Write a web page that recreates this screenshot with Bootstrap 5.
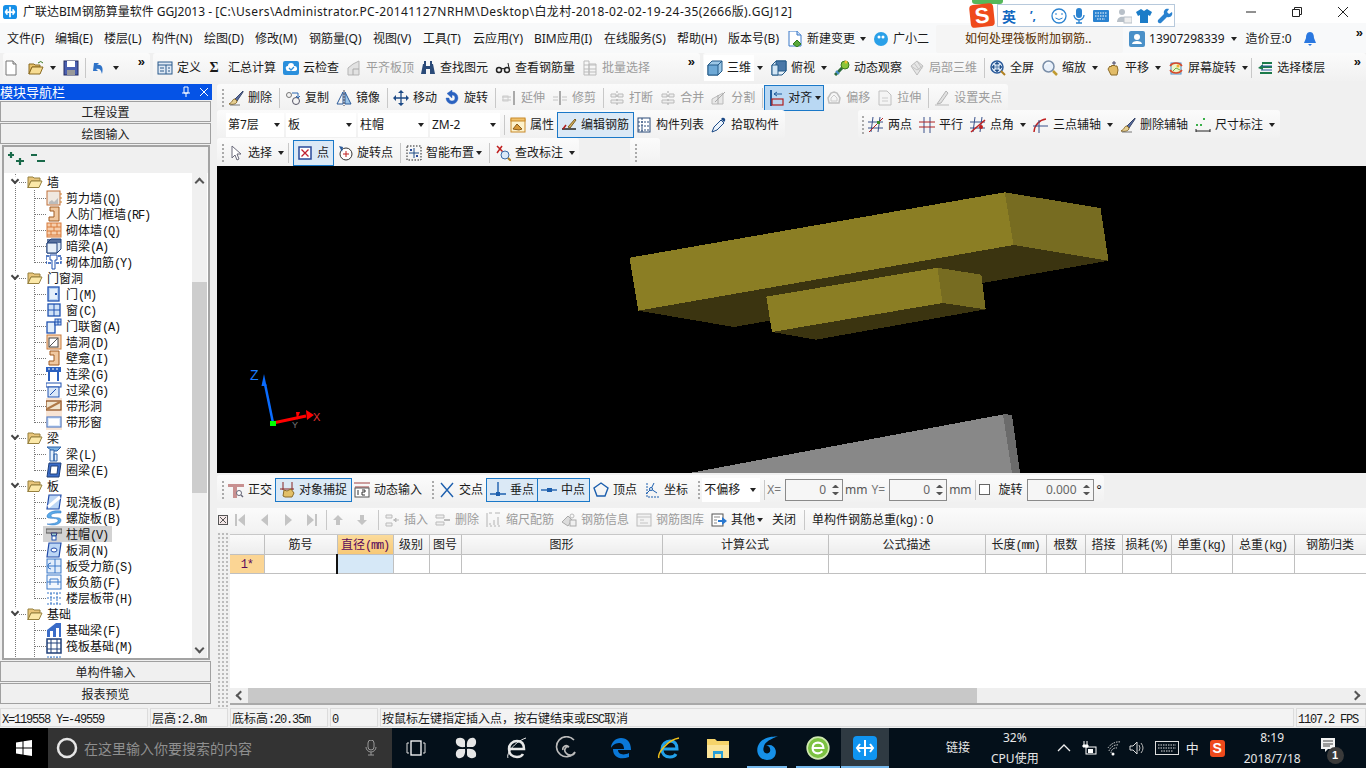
<!DOCTYPE html>
<html lang="zh">
<head>
<meta charset="utf-8">
<title>广联达BIM钢筋算量软件 GGJ2013</title>
<link href="https://cdn.jsdelivr.net/npm/bootstrap@5.3.2/dist/css/bootstrap.min.css" rel="stylesheet">
<style>
html,body{width:1366px;height:768px;overflow:hidden;margin:0}
body{background:#f0f0f0;font:12px/16px "Noto Sans","Noto Sans CJK SC",sans-serif;color:#1a1a1a}
svg{flex:none;display:block}
.gd-app{height:768px}
.gd-ic{width:16px;height:16px}
.gd-ic14{width:14px;height:14px}
.gd-m{font:12px/1 "Liberation Mono",monospace;letter-spacing:-1.2px}
.gd-off{color:#9c9c9c}
.gd-title{height:23px;background:#fff;padding-left:3px;gap:6px;white-space:nowrap;flex:none}
.gd-path{letter-spacing:.39px}
.gd-winbtn{width:46px;height:23px}
.gd-menu{height:30px;background:#f8f9fa;white-space:nowrap;padding:2px 0 0 7px;flex:none}
.gd-menugrid{display:grid;grid-template-columns:48px 49px 48px 52px 51px 54px 64px 50px 50px 61px 70px 73px 51px 60px;flex:none}
.gd-msg{width:187px;height:28px;background:#f5f5f5;color:#5a3000;padding-left:29px;line-height:28px;border-radius:2px;flex:none}
.gd-tb{height:28px;gap:3px;margin-bottom:3px;padding-left:3px;flex:none}
.gd-grp{height:28px;gap:7px;padding:2px 2px 0;flex:none;background:linear-gradient(#fbfbfb,#f1f1f1);border-radius:3px;white-space:nowrap}
.gd-it{display:inline-flex;align-items:center;gap:4px;flex:none}
.gd-car{display:inline-block;flex:none;width:0;height:0;border:3px solid transparent;border-top:4px solid #222;border-bottom:0;margin-left:-1px}
.gd-it .gd-car{margin-left:0}
.gd-sep{width:1px;height:20px;background:#c8c8c8;flex:none}
.gd-sep+.gd-it{margin-left:-2px}
.gd-more{font:700 13px/12px "Liberation Sans",sans-serif;color:#111;margin:-12px 3px 0 auto;flex:none}
.gd-grip{width:2px;height:18px;flex:none;background:repeating-linear-gradient(#aaa 0 2px,transparent 2px 4px)}
.gd-grip+*{margin-left:-3px}
.gd-on{background:#dbe9f6;outline:1px solid #1a78c8;height:24px;padding:0 4px 0 3px}
.gd-on22{height:22px}
.gd-alignbtn{padding:0 2px 0 4px;gap:3px;background:#b9d8f3}
.gd-hot{background:#fff;padding:0 3px;margin:0 -3px;height:26px}
.gd-sum{gap:8px}
.gd-sum b{font:700 14px "Liberation Serif",serif;width:12px;text-align:center}
.gd-left{width:212px;flex:none;gap:1px}
.gd-panelhead{height:16px;background:#0553e6;color:#fff;padding:0 3px 0 0;line-height:16px;font-size:13px;flex:none}
.gd-navbtn{height:21px;background:#f0f0f0;border:1px solid #a0a0a0;border-radius:0;padding:2px 0 0;font-size:12px;line-height:17px;color:#222;text-align:center;margin-right:1px;flex:none}
.gd-treebox{height:515px;background:#fff;border:2px solid #a3a3a3;margin:0 2px;overflow:hidden;flex:none}
.gd-treetop{height:26px;background:#f0f0f0;margin:0 -2px;padding:0 0 4px 5px;gap:3px;flex:none}
.gd-treeflex{min-height:0;flex:1;overflow:hidden}
.gd-tree{flex:1;min-width:0;padding-top:1px;overflow:hidden}
.gd-hd,.gd-nd{height:16px;white-space:nowrap;display:flex;align-items:center;font-family:"Noto Sans CJK SC",sans-serif;color:#111}
.gd-hd{padding-left:23px;gap:4px;background:repeating-linear-gradient(#777 0 1px,transparent 1px 2px) 11px 0/1px 100% no-repeat,repeating-linear-gradient(90deg,#777 0 1px,transparent 1px 2px) 15px 8px/8px 1px no-repeat;position:relative}
.gd-hd::before{content:"";width:6px;height:6px;border:solid #444;border-width:0 2px 2px 0;transform:rotate(45deg);position:absolute;left:8px;top:3px;background:#fff;box-shadow:2px 2px 0 #fff}
.gd-nd{padding-left:42px;gap:4px;background:repeating-linear-gradient(#777 0 1px,transparent 1px 2px) 11px 0/1px 100% no-repeat,repeating-linear-gradient(#777 0 1px,transparent 1px 2px) 30px 0/1px 100% no-repeat,repeating-linear-gradient(90deg,#777 0 1px,transparent 1px 2px) 31px 8px/11px 1px no-repeat}
.gd-nd.gd-end{background-size:1px 100%,1px 9px,11px 1px}
.gd-nd.gd-sel{background:linear-gradient(#d3d3d3,#d3d3d3) 39px 0/69px 100% no-repeat,repeating-linear-gradient(#777 0 1px,transparent 1px 2px) 11px 0/1px 100% no-repeat,repeating-linear-gradient(#777 0 1px,transparent 1px 2px) 30px 0/1px 100% no-repeat,repeating-linear-gradient(90deg,#777 0 1px,transparent 1px 2px) 31px 8px/8px 1px no-repeat}
.gd-sb{width:15px;flex:none;background:#f0f0f0;margin-right:1px}
.gd-sbtn{height:16px;display:flex;align-items:center;justify-content:center;flex:none}
.gd-chev{width:7px;height:7px;border:solid #555;border-width:2px 0 0 2px;transform:rotate(45deg);margin-top:3px}
.gd-chev.dn{transform:rotate(225deg);margin:-3px 0 0}
.gd-chev.lf{transform:rotate(-45deg);margin:0 0 0 3px}
.gd-chev.rt{transform:rotate(135deg);margin:0 3px 0 0}
.gd-thumb{background:#cdcdcd;height:211px;margin-top:93px}
.gd-work{height:623px;flex:none}
.gd-right{flex:1;min-width:0;margin-left:5px}
.gd-row{height:28px;flex:none}
.gd-rowa{height:26px}
.gd-rowa .gd-grp{height:26px}
.gd-rowd{height:30px}
.gd-rowd .gd-grp{height:27px;margin-top:2px}
.gd-p5{padding-left:5px}
.gd-p9{padding-left:9px}
.gd-p4{padding-left:4px}
.gd-p0{padding-left:0}
.gd-combos{gap:2px}
.gd-combo{display:inline-flex;align-items:center;justify-content:space-between;background:#fff;width:70px;height:24px;padding-left:2px;flex:none}
.gd-combo .gd-car{margin:0 4px 0 0}
.gd-combo58{width:58px}
.gd-canvas{height:307px;background:#000;flex:none}
.gd-spin{width:58px;height:22px;border:1px solid #8a8a8a;background:#f6f6f6;color:#666;display:flex;align-items:center;justify-content:flex-end;flex:none;padding-right:3px;gap:6px}
.gd-spin67{width:67px}
.gd-arrows{width:7px;display:flex;flex-direction:column;gap:4px}
.gd-arrows i{display:block;border:3px solid transparent;border-bottom:3px solid #555;border-top:0}
.gd-arrows i+i{border-top:3px solid #555;border-bottom:0}
.gd-lbl{color:#777}
.gd-unit{color:#555}
.gd-chk{width:11px;height:11px;flex:none;border:1px solid #666}
.gd-panel{flex:1;min-height:0;padding-top:5px;background:#f0f0f0}
.gd-dock{width:13px;flex:none;background-image:radial-gradient(#bbb 1px,transparent 1px);background-size:4px 4px;margin-top:12px}
.gd-gridwrap{flex:1;min-width:0}
.gd-ptb{height:24px;gap:7px;background:linear-gradient(#fbfbfb,#f2f2f2);white-space:nowrap;padding-left:1px;margin-left:-13px;flex:none}
.gd-sheet{flex:1;background:#fff;margin-top:2px;overflow:hidden;border-top:1px solid #c8c8c8}
.gd-sheet .table{width:1136px;table-layout:fixed;margin:0;--bs-table-bg:transparent}
.gd-sheet th,.gd-sheet td{padding:0;height:19px;box-sizing:border-box;font-weight:400;text-align:center;vertical-align:middle;border:solid #c0c0c0;border-width:0 1px 1px 0;font:12px/14px "Noto Sans CJK SC",sans-serif;color:#222;overflow:hidden}
.gd-sheet thead th{background:linear-gradient(#fafafa,#ededed)}
.gd-sheet thead th.gd-cur{background:linear-gradient(#fbdb9c,#f7c876);color:#5a0a5a}
.gd-sheet td.gd-rh{background:#fbd594;color:#5a0a5a}
.gd-sheet td.gd-cc{background:#d6e8f7;border-left:2px solid #111}
.gd-hs{height:17px;flex:none;background:#efefef;border-bottom:2px solid #a9a9a9;margin-bottom:2px}
.gd-hsbtn{width:18px;flex:none;display:flex;justify-content:center}
.gd-hs b{display:block;width:729px;height:100%;background:#c8c8c8}
.gd-status{height:21px;gap:2px;background:#f0f0f0;padding-top:1px;white-space:nowrap;flex:none}
.gd-status>div{height:19px;border:1px solid #dcdcdc;background:#f3f3f3;padding:0 1px;line-height:17px;font-family:"Noto Sans CJK SC",sans-serif;overflow:hidden;flex:none}
.gd-status>div.gd-fps{flex:1}
.gd-w48{width:48px}.gd-w78{width:78px}.gd-w98{width:98px}.gd-w148{width:148px}.gd-w914{width:914px}
.gd-w147{width:147px}.gd-w547{width:547px}.gd-w791{width:791px}.gd-w568{width:568px}.gd-w422{width:422px}.gd-w362{width:362px}.gd-w30{width:30px}.gd-w887{width:887px}
.gd-task{height:40px;background:#04101a;color:#e8e8e8;white-space:nowrap;flex:none}
.gd-start{width:48px;height:40px;background:#000;flex:none}
.gd-search{width:344px;height:40px;background:#333;color:#8f8f8f;padding-left:8px;gap:6px;font-size:14px;font-family:"Noto Sans CJK SC",sans-serif;flex:none}
.gd-searchmic{margin-right:13px}
.gd-tk{width:48px;height:40px;display:flex;align-items:center;justify-content:center;flex:none;position:relative}
.gd-tk.ul{box-shadow:inset 0 -2px 0 #76b9ed}
.gd-tk.act{background:#2f3a42;box-shadow:inset 0 -2px 0 #76b9ed}
.gd-tk40{width:40px}.gd-tk44{width:44px}
.gd-tray{line-height:16px;text-align:center;flex:none}
.gd-tray2{line-height:21px}
.gd-zh{font-size:13px}
.gd-traysg{width:15px;height:17px;background:#ef4a1b;color:#fff;border-radius:3px;font:700 14px/17px "Liberation Sans",sans-serif;text-align:center;flex:none}
.gd-noteic{margin-top:-6px}
.gd-ime{position:absolute;left:968px;top:0;width:207px;height:27px}
.gd-imebar{position:absolute;left:29px;top:4px;width:178px;height:23px;background:#fff;border:1px solid #b7c9dc;padding-left:4px}
.gd-slogo{position:absolute;left:2px;top:4px;width:24px;height:23px;background:#ef4a1b;color:#fff;border-radius:4px;font:700 22px/23px "Liberation Sans",sans-serif;text-align:center;transform:rotate(-6deg)}
.gd-sleaf{position:absolute;left:4px;top:0;width:31px;height:4px;background:#55b85a;border-radius:0 0 3px 3px}
.gd-cn{font-weight:700;color:#1168c0;font-size:14px;width:28px;font-family:"Noto Sans CJK SC",sans-serif;flex:none}
.gd-punc{width:21px;font-weight:700;color:#1168c0;line-height:12px;flex:none}
.gd-badge1{position:absolute;left:21px;top:19px;width:17px;height:17px;border-radius:50%;background:#3a3a3a;color:#fff;font:700 11px/17px "Liberation Sans",sans-serif;text-align:center}
/* one-off nudges along a toolbar */
.gd-l-5{margin-left:-5px!important}.gd-l-4{margin-left:-4px!important}.gd-l-3{margin-left:-3px!important}.gd-l-2{margin-left:-2px!important}.gd-l-1{margin-left:-1px!important}.gd-l-7{margin-left:-7px!important}
.gd-l1{margin-left:1px!important}.gd-l2{margin-left:2px!important}.gd-l3{margin-left:3px!important}.gd-l5{margin-left:5px!important}.gd-l6{margin-left:6px!important}.gd-l7{margin-left:7px!important}.gd-l8{margin-left:8px!important}
.gd-l9{margin-left:9px!important}.gd-l10{margin-left:10px!important}.gd-l11{margin-left:11px!important}.gd-l18{margin-left:18px!important}.gd-l19{margin-left:19px!important}.gd-l21{margin-left:21px!important}.gd-l51{margin-left:51px!important}.gd-l57{margin-left:57px!important}.gd-l73{margin-left:73px!important}
</style>
</head>
<body>
<svg width="0" height="0" class="position-absolute">
<defs>
<symbol id="logo" viewBox="0 0 16 16"><rect width="16" height="16" rx="3" fill="#1790e8"/><path d="M8 2v12M3 8h10M5 5l-2 3 2 3M11 5l2 3-2 3" stroke="#fff" stroke-width="2" fill="none"/></symbol>
<symbol id="new" viewBox="0 0 16 16"><path d="M3 1h7l3 3v11H3z" fill="#fff" stroke="#777"/><path d="M10 1v3h3" fill="#ddd" stroke="#777"/></symbol>
<symbol id="newg" viewBox="0 0 16 16"><path d="M2 0h8l4 4v11H2z" fill="#fff" stroke="#3a78c8"/><path d="M10 0v4h4" fill="#cfe0f5" stroke="#3a78c8"/><path d="M10 9l4 4-4 3-4-3z" fill="#5aa83a" stroke="#2c7a1c"/></symbol>
<symbol id="open" viewBox="0 0 16 16"><path d="M1 4h5l1 1h5v2H4L1 14z" fill="#e8c16a" stroke="#8a6a20"/><path d="M4 7h11l-3 7H1z" fill="#f7dc92" stroke="#8a6a20"/><path d="M10 3q3-3 5 0" stroke="#3a7a20" fill="none"/></symbol>
<symbol id="save" viewBox="0 0 16 16"><rect x="1" y="1" width="14" height="14" fill="#4a5fb0" stroke="#222a60"/><rect x="4" y="1" width="8" height="6" fill="#fff"/><rect x="4" y="10" width="8" height="5" fill="#999"/></symbol>
<symbol id="undo" viewBox="0 0 16 16"><path d="M3 3l5 0-2 2c4-1 7 2 5 9-1-5-3-6-6-5l2 2H2z" fill="#2f73c8"/></symbol>
<symbol id="def" viewBox="0 0 16 16"><rect x="1" y="2" width="14" height="12" fill="#dfe9f5" stroke="#2a5a8c"/><path d="M1 5h14M9 5v9M3 8h4M3 11h4M11 8h2M11 11h2" stroke="#2a5a8c" fill="none"/></symbol>
<symbol id="cloud" viewBox="0 0 16 16"><rect x="0" y="1" width="16" height="14" rx="2" fill="#2a8fdc"/><path d="M3 9a2 2 0 0 1 2-3 3 3 0 0 1 6 0 2.500 2.500 0 0 1 1 5H5a2 2 0 0 1-2-2z" fill="#fff"/><path d="M6 8l2 2 3-3" stroke="#2a8fdc" fill="none" stroke-width="1.300"/></symbol>
<symbol id="levelg" viewBox="0 0 16 16"><path d="M2 15V8l5-4 6-3v14z" fill="#e2e2e2" stroke="#b5b5b5"/><path d="M7 15V9h6" fill="none" stroke="#aaa"/></symbol>
<symbol id="bino" viewBox="0 0 16 16"><path d="M1 14l2-10h3v10zM10 14V4h3l2 10zM6 6h4v3H6z" fill="#2a4a78"/><rect x="4" y="1" width="2" height="3" fill="#2a4a78"/><rect x="10" y="1" width="2" height="3" fill="#2a4a78"/></symbol>
<symbol id="glass" viewBox="0 0 16 16"><circle cx="4" cy="10" r="2.500" fill="none" stroke="#222" stroke-width="1.500"/><circle cx="12" cy="10" r="2.500" fill="none" stroke="#222" stroke-width="1.500"/><path d="M6 9q2-1 4 0M14 8l-1-5" stroke="#222" fill="none"/></symbol>
<symbol id="batchg" viewBox="0 0 16 16"><path d="M2 1h5v14H2zM7 4h7v11H7zM2 5h12M2 9h12M2 12h12" fill="none" stroke="#bbb"/></symbol>
<symbol id="cube" viewBox="0 0 16 16"><path d="M1 5l4-4h10v10l-4 4H1z" fill="#9cc7e6" stroke="#245a88"/><path d="M1 5h10v10H1z" fill="#6ea9d6" stroke="#245a88"/><path d="M11 5l4-4" stroke="#245a88"/></symbol>
<symbol id="cubet" viewBox="0 0 16 16"><path d="M1 5l4-4h10v10l-4 4H1z" fill="#e8f2fa" stroke="#245a88"/><path d="M5 1h10v10H5z" fill="#4a78a8" stroke="#245a88"/><path d="M1 5h6v10H1z" fill="#d2e6f5" stroke="#245a88"/></symbol>
<symbol id="orbit" viewBox="0 0 16 16"><path d="M1 15L12 4" stroke="#2a6a3a" stroke-width="3"/><circle cx="11" cy="5" r="4" fill="#8ac43a" stroke="#3a7a20"/><circle cx="12" cy="2" r="1.500" fill="#f0c030"/><path d="M2 11l3 3" stroke="#4a90d0" stroke-width="2"/></symbol>
<symbol id="cubeg" viewBox="0 0 16 16"><path d="M2 6l6-5 6 5-6 9z" fill="#e6e6e6" stroke="#bcbcbc"/><path d="M5 3l6 8M8 1l5 8M2 6l6 4 6-4" stroke="#c4c4c4" fill="none"/></symbol>
<symbol id="full" viewBox="0 0 16 16"><circle cx="7" cy="7" r="6" fill="#d9e6f5" stroke="#2a5a9a" stroke-width="1.500"/><path d="M7 3v8M3 7h8M7 2l-2 2h4zM7 12l-2-2h4zM2 7l2-2v4zM12 7l-2-2v4z" stroke="#23508c" fill="#23508c" stroke-width=".6"/><path d="M11 11l4 4" stroke="#b08020" stroke-width="2"/></symbol>
<symbol id="zoom" viewBox="0 0 16 16"><circle cx="6.500" cy="6.500" r="5.500" fill="#e8f0fa" stroke="#7a8ea8" stroke-width="1.500"/><path d="M11 11l4 4" stroke="#c09a30" stroke-width="2.500"/><path d="M3 5q2-3 5-2" stroke="#fff" fill="none"/></symbol>
<symbol id="pan" viewBox="0 0 16 16"><path d="M3 9l2-3 1 1 1-2 1 1 1-1 1 1 2 0 1 4-1 5H6z" fill="#e2bc68" stroke="#8a6a28"/><path d="M9 1v4M7 3h4" stroke="#446"/></symbol>
<symbol id="rot" viewBox="0 0 16 16"><rect x="3" y="3" width="10" height="11" fill="#eef4c8" stroke="#4a90d0"/><path d="M5 11l3-3 4 2" stroke="#6ab04a" fill="none"/><circle cx="10" cy="6" r="1.500" fill="#f0b030"/><path d="M2 6a7 6 0 0 1 12 0M14 10a7 6 0 0 1-12 0" fill="none" stroke="#d84a2a" stroke-width="1.500"/></symbol>
<symbol id="floors" viewBox="0 0 16 16"><path d="M1 8l5-4v2h9v2H6v2zM3 12h12v2H3zM5 2h10v2H5z" fill="#1b7a4a"/><path d="M4 10h11M4 6h11" stroke="#2a5a9a"/></symbol>
<symbol id="brush" viewBox="0 0 16 16"><path d="M15 1L7 9l2 2 6-9z" fill="#5a6fa0" stroke="#39466a"/><path d="M7 9c-3 0-2 3-6 5 4 1 8 0 8-3z" fill="#e6cf92" stroke="#8a6a28"/><path d="M2 15h10" stroke="#777"/></symbol>
<symbol id="copy" viewBox="0 0 16 16"><circle cx="4" cy="5" r="2.500" fill="#f4f4f4" stroke="#777"/><circle cx="11" cy="11" r="3.500" fill="#f4f4f4" stroke="#556"/><path d="M7 3h6v5M13 8l-2-2M13 8l2-2" fill="none" stroke="#2a66b0"/></symbol>
<symbol id="mirror" viewBox="0 0 16 16"><path d="M7 2L1 14h6z" fill="none" stroke="#2a5a9a"/><path d="M9 2l6 12H9z" fill="#9cc4e6" stroke="#2a5a9a"/><path d="M8 0v16" stroke="#445" stroke-dasharray="2 1"/></symbol>
<symbol id="move" viewBox="0 0 16 16"><path d="M8 1v14M1 8h14" stroke="#1d4a86" stroke-width="1.300"/><path d="M8 0l3 3H5zM8 16l3-3H5zM0 8l3-3v6zM16 8l-3-3v6z" fill="#1d4a86"/></symbol>
<symbol id="rotate" viewBox="0 0 16 16"><path d="M8 2a6 6 0 1 1-6 6h3a3 3 0 1 0 3-3v3L3 3.500 8 0z" fill="#2a62c0" stroke="#2a62c0" stroke-width=".4"/></symbol>
<symbol id="extg" viewBox="0 0 16 16"><path d="M1 7h9M1 10h9" stroke="#c0c0c0"/><path d="M13 1v14" stroke="#aaa" stroke-width="2"/><rect x="2" y="6" width="5" height="5" fill="none" stroke="#ccc"/></symbol>
<symbol id="trimg" viewBox="0 0 16 16"><path d="M8 1v14" stroke="#aaa" stroke-width="2"/><path d="M1 7h5M1 10h5M10 7h5M10 10h5" stroke="#c4c4c4"/></symbol>
<symbol id="brkg" viewBox="0 0 16 16"><path d="M2 4h5v3H2zM9 4h5v3H9zM2 10h12v3H2z" fill="#eee" stroke="#bbb"/><path d="M8 1v14" stroke="#aaa" stroke-dasharray="2 2"/></symbol>
<symbol id="splitg" viewBox="0 0 16 16"><path d="M1 14V9l11-6v11z" fill="#e8e8e8" stroke="#bbb"/><path d="M7 14V5M14 2L4 12" stroke="#aaa"/></symbol>
<symbol id="align" viewBox="0 0 16 16"><path d="M2 0v16" stroke="#1d5a9a" stroke-width="2"/><rect x="3" y="9" width="11" height="6" fill="#bcd4ec" stroke="#b02020" stroke-width="1.200"/><path d="M13 4H5M5 4l3-2M5 4l3 2" stroke="#1d5a9a" fill="none"/></symbol>
<symbol id="offg" viewBox="0 0 16 16"><path d="M8 2l3 1 3 5-1 5H3L2 8l3-5z" fill="none" stroke="#c0c0c0" stroke-width="1.500"/><path d="M8 5l3 3v3H5V8z" fill="none" stroke="#ccc"/></symbol>
<symbol id="strg" viewBox="0 0 16 16"><path d="M2 1h8l4 4v10H2z" fill="#f4f4f4" stroke="#c0c0c0"/><path d="M5 8h6M5 11h6" stroke="#ccc"/></symbol>
<symbol id="grpg" viewBox="0 0 16 16"><path d="M1 15h14" stroke="#bbb"/><path d="M3 14l9-13 2 2-7 10z" fill="#e2e2e2" stroke="#b5b5b5"/></symbol>
<symbol id="attr" viewBox="0 0 16 16"><rect x="1" y="2" width="14" height="13" fill="#fdf2cc" stroke="#c88a2a"/><path d="M3 12l4-5 5 5-3 1z" fill="#d89a3a" stroke="#8a5a18"/><rect x="1" y="1" width="14" height="3" fill="#f0c06a" stroke="#c88a2a"/></symbol>
<symbol id="edit" viewBox="0 0 16 16"><path d="M1 12h14" stroke="#222" stroke-width="1.500"/><path d="M7 10L14 2l1 1-6 8z" fill="#d8b860" stroke="#7a5a20"/><path d="M2 12l3-4" stroke="#b02020" stroke-width="1.500"/></symbol>
<symbol id="plist" viewBox="0 0 16 16"><rect x="2" y="1" width="12" height="14" fill="#fff" stroke="#2a4a78"/><path d="M2 5h12M2 9h12M2 13h12M6 1v14" stroke="#2a4a78" stroke-dasharray="2 1"/></symbol>
<symbol id="pick" viewBox="0 0 16 16"><path d="M1 15l2-5 7-7 3 3-7 7z" fill="#eaf2fb" stroke="#1d4a86"/><path d="M10 2l1-1c2-1 4 1 3 3l-1 1z" fill="#1d4a86"/></symbol>
<symbol id="two" viewBox="0 0 16 16"><path d="M5 0L3 15M12 0l-2 15M0 5h15M0 11h15" stroke="#38508a" fill="none"/><path d="M1 15L15 1" stroke="#b02020"/><rect x="9" y="4" width="3" height="3" fill="#3a8a2a"/></symbol>
<symbol id="para" viewBox="0 0 16 16"><path d="M5 0v16M11 0v16" stroke="#3a508a"/><path d="M0 5h16M0 10h16" stroke="#b02020"/></symbol>
<symbol id="ang" viewBox="0 0 16 16"><path d="M5 0L3 15M12 0l-2 15M0 5h15M0 11h15" stroke="#38508a" fill="none"/><path d="M1 15L15 3" stroke="#c02020" stroke-width="1.500"/><circle cx="11" cy="10" r="2" fill="#c02020"/></symbol>
<symbol id="arc3" viewBox="0 0 16 16"><path d="M1 15a14 14 0 0 1 12-13" stroke="#c02020" stroke-width="1.500" fill="none"/><path d="M0 9h15M6 3v13" stroke="#38508a"/></symbol>
<symbol id="dim" viewBox="0 0 16 16"><path d="M1 12v3M15 12v3M1 14h14" stroke="#222"/><rect x="1" y="7" width="2" height="2" fill="#3ab04a"/><rect x="8" y="1" width="2" height="2" fill="#3ab04a"/><rect x="5" y="7" width="2" height="2" fill="#3ab04a"/></symbol>
<symbol id="cursor" viewBox="0 0 16 16"><path d="M4 1v12l3-3 2 5 2-1-2-5h4z" fill="#fff" stroke="#6a6a7a"/></symbol>
<symbol id="pbox" viewBox="0 0 16 16"><rect x="2" y="2" width="12" height="12" fill="#fff" stroke="#2a4a9a" stroke-width="1.500"/><path d="M4.500 4.500l7 7M11.500 4.500l-7 7" stroke="#c02030" stroke-width="1.300"/></symbol>
<symbol id="rotp" viewBox="0 0 16 16"><circle cx="9" cy="9" r="6" fill="#fff" stroke="#333"/><path d="M9 6v6M6 9h6" stroke="#c02020"/><path d="M2 1l4 1-1 5z" fill="#2a5a9a"/></symbol>
<symbol id="smart" viewBox="0 0 16 16"><rect x="1" y="1" width="14" height="14" fill="none" stroke="#222" stroke-dasharray="1.500 1.500"/><path d="M8 3v10M3 8h10" stroke="#1d4a86"/><rect x="4" y="4" width="2" height="2" fill="#2a4a9a"/><rect x="10" y="10" width="2" height="2" fill="#2a4a9a"/></symbol>
<symbol id="mark" viewBox="0 0 16 16"><path d="M2 1l7 7M2 8l5-7" stroke="#c02020" stroke-width="1.500"/><circle cx="10" cy="10" r="4" fill="#dbe9f8" stroke="#3a6aa8"/><path d="M13 13l3 3" stroke="#b08020" stroke-width="2"/></symbol>
<symbol id="ortho" viewBox="0 0 16 16"><path d="M0 2h16v3H9v11H5V5H0z" fill="#c89090"/><circle cx="11" cy="11" r="2.500" fill="#fff" stroke="#667"/><path d="M13 13l2 2" stroke="#667" stroke-width="1.500"/></symbol>
<symbol id="snap" viewBox="0 0 16 16"><path d="M4 0v8M13 0v8" stroke="#822"/><path d="M1 7h14" stroke="#822"/><path d="M4 14l1-6 3 1 4-2 3 4-2 4H6z" fill="#e2c068" stroke="#8a6a28"/></symbol>
<symbol id="dyn" viewBox="0 0 16 16"><path d="M0 1h16M1 5h14" stroke="#a04040"/><rect x="1" y="6" width="14" height="9" fill="#fff" stroke="#555"/><path d="M4 8v5M8 8h3v2H8v3h3" stroke="#333" fill="none"/></symbol>
<symbol id="cross" viewBox="0 0 16 16"><path d="M2 1l12 14M14 1L2 15" stroke="#1d5fae" stroke-width="1.400"/></symbol>
<symbol id="perp" viewBox="0 0 16 16"><path d="M8 0v12M0 12h16" stroke="#1d5fae" stroke-width="1.400"/><rect x="6" y="10" width="4" height="4" fill="#1d5fae"/></symbol>
<symbol id="mid" viewBox="0 0 16 16"><path d="M0 8h16" stroke="#1d5fae" stroke-width="1.400"/><rect x="6" y="6" width="5" height="4" fill="#1d5fae"/></symbol>
<symbol id="vert" viewBox="0 0 16 16"><path d="M8 1l7 5-3 8H4L1 6z" fill="none" stroke="#1d5fae" stroke-width="1.400"/></symbol>
<symbol id="coord" viewBox="0 0 16 16"><path d="M3 1v14h12" fill="none" stroke="#1d5fae" stroke-dasharray="2 1"/><path d="M2 12l5-5 3-6M7 7l6 4" stroke="#1d5fae" fill="none"/><circle cx="7" cy="7" r="1.500" fill="#fff" stroke="#1d5fae"/></symbol>
<symbol id="first" viewBox="0 0 16 16"><path d="M3 2h2v12H3zM13 2v12L6 8z" fill="#c4c4c4"/></symbol>
<symbol id="prev" viewBox="0 0 16 16"><path d="M11 2v12L4 8z" fill="#c4c4c4"/></symbol>
<symbol id="next" viewBox="0 0 16 16"><path d="M5 2v12l7-6z" fill="#c4c4c4"/></symbol>
<symbol id="last" viewBox="0 0 16 16"><path d="M11 2h2v12h-2zM3 2v12l7-6z" fill="#c4c4c4"/></symbol>
<symbol id="upg" viewBox="0 0 16 16"><path d="M8 3l5 5h-3v5H6V8H3z" fill="#c4c4c4"/></symbol>
<symbol id="dng" viewBox="0 0 16 16"><path d="M8 13l5-5h-3V3H6v5H3z" fill="#c4c4c4"/></symbol>
<symbol id="insg" viewBox="0 0 16 16"><path d="M2 3h6v3H2zM2 11h6v3H2z" fill="#eee" stroke="#bbb"/><path d="M9 8h6M10 8l2-2v4z" stroke="#bbb" fill="#bbb"/></symbol>
<symbol id="delg" viewBox="0 0 16 16"><path d="M1 3h8v3H1zM1 10h8v3H1z" fill="#eee" stroke="#bbb"/><path d="M9 8h6" stroke="#bbb" stroke-width="2"/></symbol>
<symbol id="scaleg" viewBox="0 0 16 16"><path d="M1 1v14M4 14h2M8 14h2M12 14h2M3 1h3M9 1h5M4 11v2M8 8v5M12 5v8" stroke="#b4b4b4" fill="none"/></symbol>
<symbol id="infog" viewBox="0 0 16 16"><path d="M1 10l6-6 4 4-4 6z" fill="#dcdcdc" stroke="#aaa"/><rect x="9" y="8" width="6" height="6" fill="#f0f0f0" stroke="#aaa"/><circle cx="11" cy="4" r="2" fill="none" stroke="#bbb"/></symbol>
<symbol id="libg" viewBox="0 0 16 16"><rect x="1" y="2" width="14" height="12" fill="#f2f2f2" stroke="#bbb"/><path d="M1 5h14M4 8h4M4 11h8" stroke="#c4c4c4"/></symbol>
<symbol id="other" viewBox="0 0 16 16"><rect x="1" y="2" width="11" height="12" fill="#fff" stroke="#555"/><path d="M3 5h6M3 8h3M3 11h3" stroke="#888"/><path d="M7 8h4V5l5 4-5 4v-3H7z" fill="#2a78d0"/></symbol>
<symbol id="fold" viewBox="0 0 16 16"><path d="M1 3h5l1 1h6v3H4l-3 7z" fill="#e8c57a" stroke="#96803e"/><path d="M4 7h11l-3 6.500H1z" fill="#fbe8a8" stroke="#96803e"/></symbol>
<symbol id="t1" viewBox="0 0 16 16"><rect x="1" y="1" width="13" height="14" fill="#f0e8e0" stroke="#c0703a"/><path d="M3 12l3-2 2 2 4-4v6H3z" fill="#bbb"/><path d="M15 3v2M15 7v2M15 11v2" stroke="#d08030"/></symbol>
<symbol id="t2" viewBox="0 0 16 16"><path d="M4 1h9v14H3v-4h5V5H4z" fill="#f0c8a0" stroke="#a05a20"/></symbol>
<symbol id="t3" viewBox="0 0 16 16"><rect x="1" y="1" width="14" height="14" fill="#f6cfae" stroke="#d87a3a"/><path d="M1 5h14M1 9h14M1 13h14M5 1v4M11 1v4M8 5v4M5 9v4M11 9v4" stroke="#d87a3a"/></symbol>
<symbol id="t4" viewBox="0 0 16 16"><path d="M1 5l4-4h10v10l-4 4H1z" fill="#d5e4f3" stroke="#1f3f78"/><path d="M1 5h10v10H1z" fill="#e6eff8" stroke="#1f3f78"/><path d="M1 1h14v4H1z" fill="#1f3f78" opacity=".7"/></symbol>
<symbol id="t5" viewBox="0 0 16 16"><rect x="0" y="2" width="15" height="7" fill="none" stroke="#1e50b0" stroke-dasharray="3 1" stroke-width="1.300"/><path d="M4 1h7v5H9v9H6V6H4z" fill="#fff" stroke="#1e50b0"/></symbol>
<symbol id="t6" viewBox="0 0 16 16"><rect x="2" y="1" width="11" height="14" fill="#b9d2f2" stroke="#2052b0" stroke-width="1.300"/><rect x="4" y="3" width="7" height="10" fill="#e4effb"/><rect x="9" y="7" width="2" height="2" fill="#2052b0"/></symbol>
<symbol id="t7" viewBox="0 0 16 16"><rect x="2" y="2" width="12" height="12" fill="#cfe1f7" stroke="#2052b0" stroke-width="1.300"/><path d="M8 2v12M2 8h12" stroke="#2052b0"/></symbol>
<symbol id="t8" viewBox="0 0 16 16"><rect x="1" y="4" width="8" height="11" fill="#e4effb" stroke="#2052b0" stroke-width="1.300"/><rect x="9" y="1" width="6" height="6" fill="#b9d2f2" stroke="#2052b0"/><path d="M12 1v6M9 4h6" stroke="#2052b0"/></symbol>
<symbol id="t9" viewBox="0 0 16 16"><rect x="1" y="1" width="14" height="14" fill="#f6d9be" stroke="#c87a3a"/><rect x="3" y="4" width="9" height="9" fill="#fff" stroke="#444"/><path d="M3 13l9-9" stroke="#555"/></symbol>
<symbol id="t10" viewBox="0 0 16 16"><rect x="0" y="1" width="15" height="5" fill="#2a60c0"/><path d="M3 6v9M12 6v9" stroke="#2a60c0" stroke-width="2"/><path d="M2 3h2M6 3h2M10 3h2" stroke="#fff"/></symbol>
<symbol id="t11" viewBox="0 0 16 16"><rect x="0" y="1" width="15" height="4" fill="#fff" stroke="#2052b0"/><rect x="2" y="5" width="11" height="10" fill="#dbe8f8" stroke="#2052b0"/><path d="M4 13l6-6" stroke="#2052b0"/></symbol>
<symbol id="t12" viewBox="0 0 16 16"><rect x="0" y="0" width="16" height="16" fill="#f8e4d4"/><rect x="0" y="3" width="15" height="9" fill="#f2e6d0" stroke="#8a4a18" stroke-width="1.200"/><path d="M1 11L14 4" stroke="#b07a48" stroke-width="2"/></symbol>
<symbol id="t13" viewBox="0 0 16 16"><rect x="0" y="0" width="16" height="16" fill="#f8e4d4"/><rect x="1" y="3" width="14" height="10" fill="#dfeafa" stroke="#5a82c8" stroke-width="1.200"/><rect x="3" y="5" width="10" height="6" fill="#fff"/></symbol>
<symbol id="t14" viewBox="0 0 16 16"><path d="M1 1h14l-4 4H6z" fill="#7ab0e0" stroke="#2a60a8"/><path d="M4 4h4v11H4zM8 8h3v7H8z" fill="#e4effb" stroke="#2a60a8"/></symbol>
<symbol id="t15" viewBox="0 0 16 16"><path d="M3 1h12l-2 14H1z" fill="#3a6cc8" stroke="#1f3f78"/><path d="M5 4h7l-1 8H4z" fill="#fff" stroke="#1f3f78"/></symbol>
<symbol id="t16" viewBox="0 0 16 16"><path d="M3 1h12l-2 14H1z" fill="#bcd6f5" stroke="#1f4aa8" stroke-width="1.200"/><path d="M2 13L14 3" stroke="#fff" stroke-width="3"/></symbol>
<symbol id="t17" viewBox="0 0 16 16"><path d="M15 1C8 0 2 2 1 6c-1 4 10 1 11 4s-6 4-11 4c6 2 14 1 14-4 0-4-10-1-10-4s5-3 10-3z" fill="#5aaae8" stroke="#2a70c0" stroke-width=".5"/></symbol>
<symbol id="t18" viewBox="0 0 16 16"><rect x="0" y="3" width="16" height="4" fill="#bbb" stroke="#555"/><path d="M5 7h6l-1 3H6z" fill="#9cc" stroke="#337"/><rect x="6" y="10" width="4" height="4" fill="#fff" stroke="#1e50b0"/></symbol>
<symbol id="t19" viewBox="0 0 16 16"><path d="M3 1h12l-2 14H1z" fill="#bcd6f5" stroke="#1f4aa8" stroke-width="1.200"/><ellipse cx="8" cy="8" rx="3" ry="2" fill="#fff" stroke="#1f4aa8"/></symbol>
<symbol id="t20" viewBox="0 0 16 16"><rect x="1" y="1" width="14" height="14" fill="#e0ecfa" stroke="#3a78c8"/><path d="M1 8h14M9 1v14M5 5a3 3 0 1 0 0 6" stroke="#3a78c8" fill="none"/></symbol>
<symbol id="t21" viewBox="0 0 16 16"><rect x="1" y="1" width="14" height="14" fill="#f2f7fd" stroke="#3a78c8"/><path d="M1 8h14M4 5h8v6M4 5v6" stroke="#3a78c8" fill="none"/></symbol>
<symbol id="t22" viewBox="0 0 16 16"><path d="M1 3h14M1 14h14M5 3v11M11 3v11M1 8h14" stroke="#3a78c8" stroke-dasharray="2 1" fill="none"/></symbol>
<symbol id="t23" viewBox="0 0 16 16"><path d="M1 15V8l9-7h5v14z" fill="#3a6cc8"/><path d="M4 15V9h3v6zM10 15V6h3v9z" fill="#fff"/></symbol>
<symbol id="t24" viewBox="0 0 16 16"><rect x="1" y="1" width="14" height="14" fill="#fff" stroke="#1f3f78" stroke-width="1.500"/><path d="M1 5h14M1 11h14M5 1v14M11 1v14" stroke="#1f3f78"/></symbol>
<symbol id="win" viewBox="0 0 16 16"><path d="M0 2.500l6.500-1v6H0zM7.500 1.300L16 0v7.500H7.500zM0 8.500h6.500v6L0 13.500zM7.500 8.500H16V16l-8.500-1.300z" fill="#fff"/></symbol>
<symbol id="micg" viewBox="0 0 16 16"><rect x="5" y="0" width="6" height="10" rx="3" fill="none" stroke="#999"/><path d="M3 7a5 5 0 0 0 10 0M8 12v3M5 15h6" fill="none" stroke="#999"/></symbol>
<symbol id="tview" viewBox="0 0 20 16"><rect x="5" y="1" width="10" height="14" fill="none" stroke="#fff" stroke-width="1.300"/><path d="M3 3H1v10h2M17 3h2v10h-2" fill="none" stroke="#ddd"/></symbol>
<symbol id="pin" viewBox="0 0 24 24"><path d="M11 11C4 12 1 8 2 4c1-3 8-3 9 1zM13 11C12 4 16 1 20 2c3 1 3 8-1 9zM13 13c7-1 10 3 9 7-1 3-8 3-9-1zM11 13c1 7-3 10-7 9-3-1-3-8 1-9z" fill="#e6e6e6"/></symbol>
<symbol id="ie1" viewBox="0 0 24 24"><path d="M5 13h14c0-6-3-8-7-8s-8 3-8 8 3 8 8 8c3 0 5-1 6-3" fill="none" stroke="#e8e8e8" stroke-width="2.500"/><path d="M3 22c-2-4 6-16 18-20" fill="none" stroke="#e8e8e8"/></symbol>
<symbol id="swirl" viewBox="0 0 24 24"><path d="M20 4A10 10 0 1 0 21 16c-1 4-7 4-9 1-3-3 0-7 3-6-3-3-7 0-6 3" fill="none" stroke="#bbb" stroke-width="1.600"/></symbol>
<symbol id="edge" viewBox="0 0 24 24"><path d="M4 13h11c0-4-2-6-5-6C6 7 3 10 2 12 2 6 7 2 12 2c6 0 10 4 10 12H9c0 4 5 6 11 3v4c-8 3-16 1-16-8z" fill="#0a78d8"/></symbol>
<symbol id="ie2" viewBox="0 0 24 24"><path d="M6 13h14c0-6-3-8-7-8s-8 3-8 8 3 8 8 8c3 0 5-1 6-3" fill="none" stroke="#22a0ea" stroke-width="3"/><path d="M2 22c-2-4 8-18 20-20" fill="none" stroke="#f2c21a" stroke-width="1.500"/></symbol>
<symbol id="expl" viewBox="0 0 24 24"><path d="M1 3h8l2 2h12v17H1z" fill="#f5d36a"/><rect x="1" y="9" width="22" height="13" fill="#fbe49a"/><rect x="7" y="15" width="10" height="7" fill="#2aa0d8"/><rect x="9" y="18" width="6" height="4" fill="#fbe49a"/></symbol>
<symbol id="gblue" viewBox="0 0 24 24"><path d="M22 1c-3 1-5 0-8 1C8 3 3 8 3 14c0 5 4 9 9 9 6 0 9-4 8-9-1-4-5-6-9-4 3 0 4 2 4 4s-2 3-3 3c-3 0-4-3-3-6 1-5 7-7 13-10z" fill="#1690e8"/></symbol>
<symbol id="greene" viewBox="0 0 24 24"><circle cx="12" cy="12" r="10" fill="#7cc242" stroke="#cfe8b0" stroke-width="1.500"/><path d="M7 12h10c0-3-2-5-5-5s-5 2-5 5 2 5 5 5c2 0 3-1 4-2" fill="none" stroke="#fff" stroke-width="2"/></symbol>
<symbol id="appb" viewBox="0 0 24 24"><rect width="24" height="24" rx="4" fill="#1094f0"/><path d="M12 4v16M5 12h14M7 8l-3 4 3 4M17 8l3 4-3 4" stroke="#fff" stroke-width="2" fill="none"/></symbol>
<symbol id="plug" viewBox="0 0 16 16"><rect x="4" y="7" width="10" height="7" fill="none" stroke="#fff"/><rect x="6" y="9" width="5" height="4" fill="#fff"/><path d="M2 1v4M5 1v4M1 5h5v2H1z" fill="#fff" stroke="#fff"/></symbol>
<symbol id="wifi" viewBox="0 0 16 16"><path d="M1 8a13 13 0 0 1 13-6M2 11a9 9 0 0 1 10-6M4 13a5 5 0 0 1 6-5" fill="none" stroke="#ddd" stroke-dasharray="1.500 1"/><circle cx="6" cy="14" r="1.500" fill="#fff"/></symbol>
<symbol id="spk" viewBox="0 0 16 16"><path d="M1 6h3l4-4v12l-4-4H1z" fill="none" stroke="#ddd"/><path d="M10 5q2 3 0 6M12 3q4 5 0 10" fill="none" stroke="#bbb"/></symbol>
<symbol id="kbd" viewBox="0 0 24 16"><rect x=".5" y="1.500" width="23" height="13" fill="none" stroke="#ddd"/><path d="M3 5h18M3 8h18M6 11h12" stroke="#ddd" stroke-dasharray="1.500 1"/></symbol>
<symbol id="note" viewBox="0 0 16 16"><path d="M1 1h14v11H8l-3 3v-3H1z" fill="#f2f2f2"/><path d="M3 4h10M3 7h10M3 9h7" stroke="#444"/></symbol>
<symbol id="face" viewBox="0 0 16 16"><circle cx="8" cy="8" r="7" fill="none" stroke="#2a82d0" stroke-width="1.300"/><path d="M5 5v2M11 5v2M4.500 10q3.500 3 7 0" fill="none" stroke="#2a82d0"/></symbol>
<symbol id="imic" viewBox="0 0 16 16"><rect x="5" y="0" width="6" height="10" rx="3" fill="#2a82d0"/><path d="M3 7a5 5 0 0 0 10 0M8 12v3M5 15h6" fill="none" stroke="#2a82d0" stroke-width="1.300"/></symbol>
<symbol id="ikbd" viewBox="0 0 16 16"><rect x="0" y="2" width="16" height="12" rx="1" fill="#2a82d0"/><path d="M2 5h12M2 8h12M4 11h8" stroke="#fff" stroke-dasharray="1.500 1"/></symbol>
<symbol id="iuser" viewBox="0 0 16 16"><circle cx="6" cy="4" r="3" fill="#b8c0c8"/><path d="M1 14c0-7 10-7 10 0z" fill="#b8c0c8"/><rect x="8" y="9" width="8" height="6" fill="#eee" stroke="#b8c0c8"/></symbol>
<symbol id="ishirt" viewBox="0 0 16 16"><path d="M5 1L0 4l2 4 2-1v8h8V7l2 1 2-4-5-3-3 2z" fill="#1b7cc8"/></symbol>
<symbol id="iwr" viewBox="0 0 16 16"><path d="M15 4l-3 2-2-2 2-3c-3-1-6 1-5 5L1 12c-1 2 1 4 3 3l6-6c4 1 6-2 5-5z" fill="#2a82d0"/></symbol>
<symbol id="plus" viewBox="0 0 20 16"><path d="M1 5h6M4 2v6M9 11h8M13 8v7" stroke="#1a6a4a" stroke-width="2.200"/></symbol>
<symbol id="minus" viewBox="0 0 16 16"><path d="M1 5h6M7 11h8" stroke="#1a6a4a" stroke-width="2.200"/></symbol>
<symbol id="dockx" viewBox="0 0 10 10"><rect x=".5" y=".5" width="9" height="9" fill="#f4e8e8" stroke="#555"/><path d="M2 2l6 6M8 2L2 8" stroke="#555"/></symbol>
</defs>
</svg>

<div class="gd-app d-flex flex-column">
<!-- title -->
<div class="gd-title d-flex align-items-center">
<svg class="gd-ic14"><use href="#logo"/></svg>
<span>广联达BIM钢筋算量软件 GGJ2013 - <span class="gd-path">[C:\Users\Administrator.PC-20141127NRHM\Desktop\白龙村-2018-02-02-19-24-35(2666版).GGJ12]</span></span>
<div class="ms-auto d-flex">
<div class="gd-winbtn d-flex align-items-center justify-content-center"><svg width="10" height="10"><path d="M0 5h10" stroke="#222"/></svg></div>
<div class="gd-winbtn d-flex align-items-center justify-content-center"><svg width="10" height="10"><path d="M.5 2.500h7v7h-7zM2.500 2.500v-2h7v7h-2" fill="none" stroke="#222"/></svg></div>
<div class="gd-winbtn d-flex align-items-center justify-content-center"><svg width="12" height="12"><path d="M1 1l10 10M11 1L1 11" stroke="#222"/></svg></div>
</div>
</div>
<!-- menu -->
<div class="gd-menu d-flex align-items-center">
<div class="gd-menugrid"><span>文件(F)</span><span>编辑(E)</span><span>楼层(L)</span><span>构件(N)</span><span>绘图(D)</span><span>修改(M)</span><span>钢筋量(Q)</span><span>视图(V)</span><span>工具(T)</span><span>云应用(Y)</span><span>BIM应用(I)</span><span>在线服务(S)</span><span>帮助(H)</span><span>版本号(B)</span></div>
<span class="gd-it gd-l-1"><svg class="gd-ic"><use href="#newg"/></svg>新建变更</span><i class="gd-car gd-l5"></i>
<span class="gd-it gd-l7"><svg class="gd-ic"><circle cx="8" cy="8" r="7" fill="#2aa0e8"/><circle cx="6" cy="6" r="1.500" fill="#fff"/><circle cx="10" cy="6" r="1.500" fill="#fff"/></svg>广小二</span>
<span class="gd-msg gd-l7">如何处理筏板附加钢筋..</span>
<span class="gd-it gd-l6"><svg class="gd-ic"><rect width="16" height="16" rx="2" fill="#4a90c8"/><circle cx="8" cy="6" r="3" fill="#fff"/><path d="M3 13c0-4 10-4 10 0z" fill="#fff"/></svg>13907298339</span><i class="gd-car gd-l6"></i>
<span class="gd-l9">造价豆:0</span>
<svg class="gd-ic gd-l10"><path d="M8 1c3 0 4 3 4 6l2 5H2l2-5c0-3 1-6 4-6zM6 13h4l-2 2z" fill="#2a78e0"/></svg>
<span class="gd-more">»</span>
</div>
<!-- top toolbar -->
<div class="gd-tb d-flex">
<div class="gd-grp gd-w147 gd-p0 d-flex align-items-center">
<svg class="gd-ic"><use href="#new"/></svg><svg class="gd-ic gd-l2"><use href="#open"/></svg><i class="gd-car"></i><svg class="gd-ic"><use href="#save"/></svg><div class="gd-sep gd-l-1"></div><svg class="gd-ic gd-l-2"><use href="#undo"/></svg><i class="gd-car"></i><span class="gd-more">»</span>
</div>
<div class="gd-grp gd-w547 gd-p4 d-flex align-items-center">
<span class="gd-it"><svg class="gd-ic"><use href="#def"/></svg>定义</span>
<span class="gd-it gd-sum"><b>Σ</b>汇总计算</span>
<span class="gd-it"><svg class="gd-ic"><use href="#cloud"/></svg>云检查</span>
<span class="gd-it gd-off"><svg class="gd-ic"><use href="#levelg"/></svg>平齐板顶</span>
<span class="gd-it gd-l-1"><svg class="gd-ic"><use href="#bino"/></svg>查找图元</span>
<span class="gd-it"><svg class="gd-ic"><use href="#glass"/></svg>查看钢筋量</span>
<span class="gd-it gd-off"><svg class="gd-ic"><use href="#batchg"/></svg>批量选择</span>
<span class="gd-more">»</span>
</div>
<div class="gd-grp gd-p4 d-flex align-items-center flex-grow-1">
<span class="gd-it gd-hot"><svg class="gd-ic"><use href="#cube"/></svg>三维</span><i class="gd-car"></i>
<span class="gd-it gd-l1"><svg class="gd-ic"><use href="#cubet"/></svg>俯视</span><i class="gd-car"></i>
<span class="gd-it"><svg class="gd-ic"><use href="#orbit"/></svg>动态观察</span>
<span class="gd-it gd-off"><svg class="gd-ic"><use href="#cubeg"/></svg>局部三维</span>
<div class="gd-sep"></div>
<span class="gd-it"><svg class="gd-ic"><use href="#full"/></svg>全屏</span>
<span class="gd-it gd-l1"><svg class="gd-ic"><use href="#zoom"/></svg>缩放</span><i class="gd-car"></i>
<span class="gd-it"><svg class="gd-ic"><use href="#pan"/></svg>平移</span><i class="gd-car"></i>
<span class="gd-it"><svg class="gd-ic"><use href="#rot"/></svg>屏幕旋转</span><i class="gd-car"></i>
<div class="gd-sep gd-l-4"></div>
<span class="gd-it"><svg class="gd-ic"><use href="#floors"/></svg>选择楼层</span>
<span class="gd-more">»</span>
</div>
</div>

<div class="gd-work d-flex">
<!-- left panel -->
<div class="gd-left d-flex flex-column">
<div class="gd-panelhead d-flex align-items-center justify-content-between"><span>模块导航栏</span><span class="d-flex gap-2 align-items-center"><svg width="10" height="12"><path d="M3 1h4v6H3zM1 7h8M5 7v4" fill="none" stroke="#fff"/></svg><svg width="10" height="10"><path d="M1 1l8 8M9 1L1 9" stroke="#fff"/></svg></span></div>
<button class="gd-navbtn" type="button">工程设置</button>
<button class="gd-navbtn" type="button">绘图输入</button>
<div class="gd-treebox d-flex flex-column">
<div class="gd-treetop d-flex align-items-center"><svg width="20" height="16"><use href="#plus"/></svg><svg width="16" height="16"><use href="#minus"/></svg></div>
<div class="gd-treeflex d-flex">
<div class="gd-tree">
<div class="gd-hd"><svg class="gd-ic"><use href="#fold"/></svg>墙</div>
<div class="gd-nd"><svg class="gd-ic"><use href="#t1"/></svg><span>剪力墙<span class="gd-m">(Q)</span></span></div>
<div class="gd-nd"><svg class="gd-ic"><use href="#t2"/></svg><span>人防门框墙<span class="gd-m">(RF)</span></span></div>
<div class="gd-nd"><svg class="gd-ic"><use href="#t3"/></svg><span>砌体墙<span class="gd-m">(Q)</span></span></div>
<div class="gd-nd"><svg class="gd-ic"><use href="#t4"/></svg><span>暗梁<span class="gd-m">(A)</span></span></div>
<div class="gd-nd gd-end"><svg class="gd-ic"><use href="#t5"/></svg><span>砌体加筋<span class="gd-m">(Y)</span></span></div>
<div class="gd-hd"><svg class="gd-ic"><use href="#fold"/></svg>门窗洞</div>
<div class="gd-nd"><svg class="gd-ic"><use href="#t6"/></svg><span>门<span class="gd-m">(M)</span></span></div>
<div class="gd-nd"><svg class="gd-ic"><use href="#t7"/></svg><span>窗<span class="gd-m">(C)</span></span></div>
<div class="gd-nd"><svg class="gd-ic"><use href="#t8"/></svg><span>门联窗<span class="gd-m">(A)</span></span></div>
<div class="gd-nd"><svg class="gd-ic"><use href="#t9"/></svg><span>墙洞<span class="gd-m">(D)</span></span></div>
<div class="gd-nd"><svg class="gd-ic"><use href="#t2"/></svg><span>壁龛<span class="gd-m">(I)</span></span></div>
<div class="gd-nd"><svg class="gd-ic"><use href="#t10"/></svg><span>连梁<span class="gd-m">(G)</span></span></div>
<div class="gd-nd"><svg class="gd-ic"><use href="#t11"/></svg><span>过梁<span class="gd-m">(G)</span></span></div>
<div class="gd-nd"><svg class="gd-ic"><use href="#t12"/></svg><span>带形洞</span></div>
<div class="gd-nd gd-end"><svg class="gd-ic"><use href="#t13"/></svg><span>带形窗</span></div>
<div class="gd-hd"><svg class="gd-ic"><use href="#fold"/></svg>梁</div>
<div class="gd-nd"><svg class="gd-ic"><use href="#t14"/></svg><span>梁<span class="gd-m">(L)</span></span></div>
<div class="gd-nd gd-end"><svg class="gd-ic"><use href="#t15"/></svg><span>圈梁<span class="gd-m">(E)</span></span></div>
<div class="gd-hd"><svg class="gd-ic"><use href="#fold"/></svg>板</div>
<div class="gd-nd"><svg class="gd-ic"><use href="#t16"/></svg><span>现浇板<span class="gd-m">(B)</span></span></div>
<div class="gd-nd"><svg class="gd-ic"><use href="#t17"/></svg><span>螺旋板<span class="gd-m">(B)</span></span></div>
<div class="gd-nd gd-sel"><svg class="gd-ic"><use href="#t18"/></svg><span>柱帽<span class="gd-m">(V)</span></span></div>
<div class="gd-nd"><svg class="gd-ic"><use href="#t19"/></svg><span>板洞<span class="gd-m">(N)</span></span></div>
<div class="gd-nd"><svg class="gd-ic"><use href="#t20"/></svg><span>板受力筋<span class="gd-m">(S)</span></span></div>
<div class="gd-nd"><svg class="gd-ic"><use href="#t21"/></svg><span>板负筋<span class="gd-m">(F)</span></span></div>
<div class="gd-nd gd-end"><svg class="gd-ic"><use href="#t22"/></svg><span>楼层板带<span class="gd-m">(H)</span></span></div>
<div class="gd-hd"><svg class="gd-ic"><use href="#fold"/></svg>基础</div>
<div class="gd-nd"><svg class="gd-ic"><use href="#t23"/></svg><span>基础梁<span class="gd-m">(F)</span></span></div>
<div class="gd-nd"><svg class="gd-ic"><use href="#t24"/></svg><span>筏板基础<span class="gd-m">(M)</span></span></div>
<div class="gd-nd"><svg class="gd-ic"><use href="#t22"/></svg></div>
</div>
<div class="gd-sb d-flex flex-column">
<div class="gd-sbtn"><i class="gd-chev"></i></div>
<div class="gd-thumb"></div>
<div class="gd-sbtn mt-auto"><i class="gd-chev dn"></i></div>
</div>
</div>
</div>
<button class="gd-navbtn" type="button">单构件输入</button>
<button class="gd-navbtn" type="button">报表预览</button>
</div>
<!-- right column -->
<div class="gd-right d-flex flex-column">
<div class="gd-row gd-rowa d-flex">
<div class="gd-grp gd-w791 gd-p5 d-flex align-items-center">
<i class="gd-grip"></i>
<span class="gd-it"><svg class="gd-ic"><use href="#brush"/></svg>删除</span><div class="gd-sep"></div>
<span class="gd-it"><svg class="gd-ic"><use href="#copy"/></svg>复制</span>
<span class="gd-it"><svg class="gd-ic"><use href="#mirror"/></svg>镜像</span><div class="gd-sep"></div>
<span class="gd-it"><svg class="gd-ic"><use href="#move"/></svg>移动</span>
<span class="gd-it"><svg class="gd-ic"><use href="#rotate"/></svg>旋转</span><div class="gd-sep"></div>
<span class="gd-it gd-off"><svg class="gd-ic"><use href="#extg"/></svg>延伸</span>
<span class="gd-it gd-off"><svg class="gd-ic"><use href="#trimg"/></svg>修剪</span><div class="gd-sep"></div>
<span class="gd-it gd-off"><svg class="gd-ic"><use href="#brkg"/></svg>打断</span>
<span class="gd-it gd-off"><svg class="gd-ic"><use href="#brkg"/></svg>合并</span>
<span class="gd-it gd-off"><svg class="gd-ic"><use href="#splitg"/></svg>分割</span><div class="gd-sep"></div>
<span class="gd-it gd-on gd-alignbtn gd-l-5"><svg class="gd-ic"><use href="#align"/></svg>对齐<i class="gd-car"></i></span>
<span class="gd-it gd-off gd-l-4"><svg class="gd-ic"><use href="#offg"/></svg>偏移</span>
<span class="gd-it gd-off"><svg class="gd-ic"><use href="#strg"/></svg>拉伸</span><div class="gd-sep"></div>
<span class="gd-it gd-off"><svg class="gd-ic"><use href="#grpg"/></svg>设置夹点</span>
</div>
</div>
<div class="gd-row d-flex">
<div class="gd-grp gd-w568 gd-p9 d-flex align-items-center">
<div class="gd-combos d-flex">
<span class="gd-combo gd-combo58">第7层<i class="gd-car"></i></span><span class="gd-combo">板<i class="gd-car"></i></span><span class="gd-combo">柱帽<i class="gd-car"></i></span><span class="gd-combo">ZM-2<i class="gd-car"></i></span>
</div>
<div class="gd-sep gd-l-3"></div>
<span class="gd-it"><svg class="gd-ic"><use href="#attr"/></svg>属性</span>
<span class="gd-it gd-on gd-l-3"><svg class="gd-ic"><use href="#edit"/></svg>编辑钢筋</span>
<span class="gd-it gd-l-4"><svg class="gd-ic"><use href="#plist"/></svg>构件列表</span>
<span class="gd-it"><svg class="gd-ic"><use href="#pick"/></svg>拾取构件</span>
</div>
<div class="gd-grp gd-w422 gd-p4 d-flex align-items-center gd-l73">
<i class="gd-grip"></i>
<span class="gd-it"><svg class="gd-ic"><use href="#two"/></svg>两点</span>
<span class="gd-it"><svg class="gd-ic"><use href="#para"/></svg>平行</span>
<span class="gd-it"><svg class="gd-ic"><use href="#ang"/></svg>点角</span><i class="gd-car"></i>
<span class="gd-it"><svg class="gd-ic"><use href="#arc3"/></svg>三点辅轴</span><i class="gd-car"></i>
<span class="gd-it"><svg class="gd-ic"><use href="#brush"/></svg>删除辅轴</span>
<span class="gd-it"><svg class="gd-ic"><use href="#dim"/></svg>尺寸标注</span><i class="gd-car"></i>
</div>
</div>
<div class="gd-row d-flex">
<div class="gd-grp gd-w362 gd-p5 d-flex align-items-center">
<i class="gd-grip"></i>
<span class="gd-it"><svg class="gd-ic"><use href="#cursor"/></svg>选择</span><i class="gd-car"></i><div class="gd-sep gd-l-3"></div>
<span class="gd-it gd-on gd-l-2"><svg class="gd-ic"><use href="#pbox"/></svg>点</span>
<span class="gd-it gd-l-3"><svg class="gd-ic"><use href="#rotp"/></svg>旋转点</span><div class="gd-sep"></div>
<span class="gd-it"><svg class="gd-ic"><use href="#smart"/></svg>智能布置</span><i class="gd-car gd-l-5"></i><div class="gd-sep"></div>
<span class="gd-it"><svg class="gd-ic"><use href="#mark"/></svg>查改标注</span><i class="gd-car"></i>
</div>
<div class="gd-grp gd-w30 gd-p5 d-flex align-items-center gd-l51"><i class="gd-grip"></i></div>
</div>
<!-- 3d view -->
<div class="gd-canvas">
<svg width="1149" height="307" viewBox="217 166 1149 307" shape-rendering="crispEdges">
<path d="M629.500 257.700L1004.700 192.300 1013.500 245 638.300 310.700z" fill="#8b7e24"/>
<path d="M1004.700 192.300L1100.500 208 1108.500 260.700 1013.500 245z" fill="#776c21"/>
<path d="M638.300 310.700L1013.500 245 1108.500 260.700 734 327z" fill="#3b3410"/>
<path d="M766.300 296.700L937.400 267.700 942.500 303 772 332z" fill="#8b7e24"/>
<path d="M937.400 267.700L981.300 274.700 985.700 309.300 942.500 303z" fill="#776c21"/>
<path d="M772 332L942.500 303 985.700 309.300 816 339.700z" fill="#3b3410"/>
<path d="M689.500 473L1004 414.300 1012 473z" fill="#888"/>
<path d="M1003 414.300L1006 414.300 1012 415 1020 473 1012 473z" fill="#6b6b6b"/>
<g shape-rendering="auto">
<path d="M273 423L265 384" stroke="#0a6cff" stroke-width="2.500"/><path d="M264 374l-2.500 12h5z" fill="#0a6cff"/>
<path d="M273 423L306 416" stroke="#f00" stroke-width="3"/><path d="M314 415l-8-5 1 10zM296 412l1 8 3-8z" fill="#f00"/>
<rect x="270" y="421" width="6" height="5" fill="#0f0"/>
<text x="250" y="380" fill="#1a7cff" font-size="14" font-family="Liberation Sans">Z</text>
<text x="313" y="421" fill="#e03030" font-size="11" font-family="Liberation Sans">X</text>
<text x="292" y="428" fill="#777" font-size="9" font-family="Liberation Sans">Y</text>
</g>
</svg>
</div>
<div class="gd-row gd-rowd d-flex">
<div class="gd-grp gd-w887 gd-p5 d-flex align-items-center">
<i class="gd-grip"></i>
<span class="gd-it"><svg class="gd-ic"><use href="#ortho"/></svg>正交</span>
<span class="gd-it gd-on gd-on22 gd-l-3"><svg class="gd-ic"><use href="#snap"/></svg>对象捕捉</span>
<span class="gd-it gd-l-4"><svg class="gd-ic"><use href="#dyn"/></svg>动态输入</span>
<i class="gd-grip gd-l3"></i>
<span class="gd-it gd-l-2"><svg class="gd-ic"><use href="#cross"/></svg>交点</span>
<span class="gd-it gd-on gd-on22 gd-l-3"><svg class="gd-ic"><use href="#perp"/></svg>垂点</span>
<span class="gd-it gd-on gd-on22 gd-l-7"><svg class="gd-ic"><use href="#mid"/></svg>中点</span>
<span class="gd-it gd-l-3"><svg class="gd-ic"><use href="#vert"/></svg>顶点</span>
<span class="gd-it"><svg class="gd-ic"><use href="#coord"/></svg>坐标</span>
<i class="gd-grip gd-l3"></i>
<span class="gd-combo gd-combo58 gd-l-5">不偏移<i class="gd-car"></i></span>
<div class="gd-sep gd-l-3"></div>
<span class="gd-lbl gd-l-5">X=</span><span class="gd-spin gd-l-3">0<span class="gd-arrows"><i></i><i></i></span></span><span class="gd-unit gd-l-5">mm</span>
<span class="gd-lbl gd-l-3">Y=</span><span class="gd-spin gd-l-3">0<span class="gd-arrows"><i></i><i></i></span></span><span class="gd-unit gd-l-5">mm</span>
<div class="gd-sep gd-l-4"></div>
<input type="checkbox" class="form-check-input gd-chk rounded-0 mt-0 gd-l-4" aria-label="旋转">
<span class="gd-l2">旋转</span><span class="gd-spin gd-spin67 gd-l-3">0.000<span class="gd-arrows"><i></i><i></i></span></span><span class="gd-l-4">°</span>
</div>
</div>
<!-- rebar grid -->
<div class="gd-panel d-flex">
<div class="gd-dock"></div>
<div class="gd-gridwrap d-flex flex-column">
<div class="gd-ptb d-flex align-items-center">
<svg width="10" height="10"><use href="#dockx"/></svg>
<svg class="gd-ic gd-l-3"><use href="#first"/></svg><svg class="gd-ic gd-l2"><use href="#prev"/></svg><svg class="gd-ic"><use href="#next"/></svg><svg class="gd-ic gd-l1"><use href="#last"/></svg><div class="gd-sep gd-l-1"></div>
<svg class="gd-ic gd-l-4"><use href="#upg"/></svg><svg class="gd-ic gd-l1"><use href="#dng"/></svg><div class="gd-sep gd-l1"></div>
<span class="gd-it gd-off"><svg class="gd-ic"><use href="#insg"/></svg>插入</span>
<span class="gd-it gd-off"><svg class="gd-ic"><use href="#delg"/></svg>删除</span>
<span class="gd-it gd-off"><svg class="gd-ic"><use href="#scaleg"/></svg>缩尺配筋</span>
<span class="gd-it gd-off"><svg class="gd-ic"><use href="#infog"/></svg>钢筋信息</span>
<span class="gd-it gd-off"><svg class="gd-ic"><use href="#libg"/></svg>钢筋图库</span>
<span class="gd-it"><svg class="gd-ic"><use href="#other"/></svg>其他</span><i class="gd-car gd-l-5"></i>
<span class="gd-l2">关闭</span><div class="gd-sep gd-l1"></div>
<span>单构件钢筋总重(kg) : 0</span>
</div>
<div class="gd-sheet">
<table class="table">
<colgroup><col width="34"><col width="73"><col width="56"><col width="36"><col width="32"><col width="201"><col width="166"><col width="157"><col width="61"><col width="39"><col width="37"><col width="49"><col width="61"><col width="62"><col width="72"></colgroup>
<thead><tr><th></th><th>筋号</th><th class="gd-cur">直径<span class="gd-m">(mm)</span></th><th>级别</th><th>图号</th><th>图形</th><th>计算公式</th><th>公式描述</th><th>长度<span class="gd-m">(mm)</span></th><th>根数</th><th>搭接</th><th>损耗<span class="gd-m">(%)</span></th><th>单重<span class="gd-m">(kg)</span></th><th>总重<span class="gd-m">(kg)</span></th><th>钢筋归类</th></tr></thead>
<tbody><tr><td class="gd-rh"><span class="gd-m">1*</span></td><td></td><td class="gd-cc"></td><td></td><td></td><td></td><td></td><td></td><td></td><td></td><td></td><td></td><td></td><td></td><td></td></tr></tbody>
</table>
</div>
<div class="gd-hs d-flex align-items-center"><span class="gd-hsbtn"><i class="gd-chev lf"></i></span><b></b><span class="gd-hsbtn ms-auto"><i class="gd-chev rt"></i></span></div>
</div>
</div>
</div>
</div>
<!-- status -->
<div class="gd-status d-flex">
<div class="gd-w148"><span class="gd-m">X=119558 Y=-49559</span></div>
<div class="gd-w78">层高<span class="gd-m">:2.8m</span></div>
<div class="gd-w98">底标高<span class="gd-m">:20.35m</span></div>
<div class="gd-w48"><span class="gd-m">0</span></div>
<div class="gd-w914">按鼠标左键指定插入点，按右键结束或<span class="gd-m">ESC</span>取消</div>
<div class="gd-fps"><span class="gd-m">1107.2 FPS</span></div>
</div>
<!-- taskbar -->
<div class="gd-task d-flex align-items-center">
<div class="gd-start d-flex align-items-center justify-content-center"><svg width="16" height="16"><use href="#win"/></svg></div>
<div class="gd-search d-flex align-items-center">
<svg width="22" height="22"><circle cx="11" cy="11" r="9" fill="none" stroke="#e6e6e6" stroke-width="2.500"/></svg>
<span>在这里输入你要搜索的内容</span>
<svg class="gd-ic ms-auto gd-searchmic"><use href="#micg"/></svg>
</div>
<div class="gd-tk"><svg width="20" height="16"><use href="#tview"/></svg></div>
<div class="gd-tk gd-l2"><svg width="24" height="24"><use href="#pin"/></svg></div>
<div class="gd-tk gd-l3"><svg width="24" height="24"><use href="#ie1"/></svg></div>
<div class="gd-tk gd-l1"><svg width="24" height="24"><use href="#swirl"/></svg></div>
<div class="gd-tk gd-l7"><svg width="24" height="24"><use href="#edge"/></svg></div>
<div class="gd-tk"><svg width="24" height="24"><use href="#ie2"/></svg></div>
<div class="gd-tk gd-l1"><svg width="24" height="24"><use href="#expl"/></svg></div>
<div class="gd-tk gd-tk40 ul gd-l5"><svg width="26" height="26"><use href="#gblue"/></svg></div>
<div class="gd-tk gd-tk44 ul gd-l9"><svg width="26" height="26"><use href="#greene"/></svg></div>
<div class="gd-tk act gd-l1"><svg width="24" height="24"><use href="#appb"/></svg></div>
<span class="gd-tray gd-l57">链接</span>
<div class="gd-tray gd-tray2 gd-l21">32%<br>CPU使用</div>
<svg width="14" height="8" class="gd-l18"><path d="M1 7l6-6 6 6" fill="none" stroke="#eee" stroke-width="1.300"/></svg>
<svg class="gd-ic gd-l11"><use href="#plug"/></svg>
<svg class="gd-ic gd-l9"><use href="#wifi"/></svg>
<svg class="gd-ic gd-l6"><use href="#spk"/></svg>
<svg width="24" height="16" class="gd-l10"><use href="#kbd"/></svg>
<span class="gd-zh gd-l7">中</span>
<span class="gd-traysg gd-l11">S</span>
<div class="gd-tray gd-tray2 gd-l19">8:19<br>2018/7/18</div>
<div class="gd-tk gd-tk44 gd-l5"><svg width="16" height="16" class="gd-noteic"><use href="#note"/></svg><span class="gd-badge1">1</span></div>
</div>
</div>

<!-- sogou input bar floats over the title bar -->
<div class="gd-ime">
<div class="gd-sleaf"></div>
<div class="gd-imebar d-flex align-items-center">
<span class="gd-cn">英</span>
<span class="gd-punc">’,</span>
<svg class="gd-ic"><use href="#face"/></svg>
<svg class="gd-ic ms-1"><use href="#imic"/></svg>
<svg class="gd-ic gd-l6"><use href="#ikbd"/></svg>
<svg class="gd-ic gd-l7"><use href="#iuser"/></svg>
<svg class="gd-ic ms-1"><use href="#ishirt"/></svg>
<svg class="gd-ic gd-l5"><use href="#iwr"/></svg>
</div>
<div class="gd-slogo">S</div>
</div>

<script src="https://cdn.jsdelivr.net/npm/bootstrap@5.3.2/dist/js/bootstrap.bundle.min.js"></script>
</body>
</html>
